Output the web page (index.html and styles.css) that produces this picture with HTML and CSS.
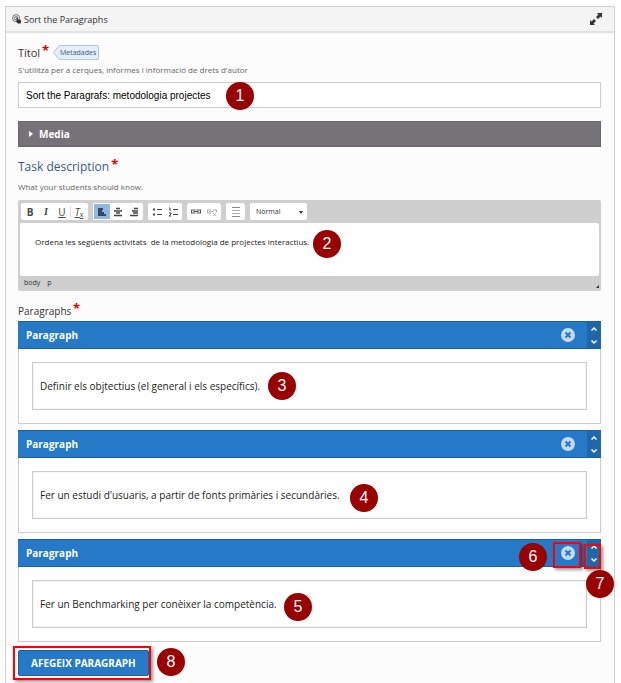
FILE: index.html
```html
<!DOCTYPE html>
<html lang="ca">
<head>
	<meta charset="utf-8">
	<title>Sort the Paragraphs</title>
	<link rel="stylesheet" href="styles.css">
</head>
<body>
	<form class="panel">
		<header class="panel-header">
			<svg class="logo" viewBox="0 0 12 12"><circle cx="5" cy="5" r="4.300" fill="none" stroke="#555"/><circle cx="5" cy="5" r="2" fill="none" stroke="#555"/><path d="M5 4.500l1.300-.5 1 2.500 2.700.5 1 1.500-.5 3H7L4.500 8.500l.5-.8 1 .5z" fill="#333"/></svg>
			<h1>Sort the Paragraphs</h1>
			<button type="button" class="expand" aria-label="Pantalla completa">
				<svg viewBox="0 0 12 12"><path d="M7 0h5v5l-1.500-1.500L8 6 6 4l2.500-2.500zM5 12H0V7l1.500 1.500L4 6l2 2-2.500 2.500z" fill="#333"/></svg>
			</button>
		</header>
		<div class="panel-body">
			<div class="label-row">
				<label for="title">Títol <span class="required">*</span></label>
				<button type="button" class="metadata">
					<svg viewBox="0 0 46 16" preserveAspectRatio="none"><path d="M.5 8l5-6.500Q6.500.5 8 .5h36q1.500 0 1.500 1.500v12q0 1.500-1.500 1.500H8q-1.500 0-2.500-1z" fill="#e6eff8" stroke="#a9c3dc"/></svg>
					<span>Metadades</span>
				</button>
			</div>
			<p class="hint">S'utilitza per a cerques, informes i informació de drets d'autor</p>
			<div class="field">
				<input type="text" id="title" class="title-input" value="Sort the Paragrafs: metodologia projectes">
				<span class="badge badge-1">1</span>
			</div>

			<button type="button" class="media"><span class="arrow"></span>Media</button>

			<label class="task-label" for="task">Task description <span class="required">*</span></label>
			<p class="hint task-hint">What your students should know.</p>
			<div class="editor">
				<div class="toolbar">
					<div class="group">
						<button type="button" class="tool bold">B</button>
						<button type="button" class="tool italic">I</button>
						<button type="button" class="tool underline">U</button>
						<span class="divider"></span>
						<button type="button" class="tool clear"><i>T</i><sub>x</sub></button>
					</div>
					<div class="group">
						<button type="button" class="tool active" aria-label="Left"><svg viewBox="0 0 10 10"><path d="M1 1h5v2H1zM1 3h4v2H1zM1 5h6v2H1zM1 7h8v2H1z" fill="#33485c"/></svg></button>
						<button type="button" class="tool" aria-label="Center"><svg viewBox="0 0 10 10"><path d="M3 1.500h4M1 4h8M3 6h4M1 8.500h8" stroke="#444" stroke-width="1.500"/></svg></button>
						<button type="button" class="tool" aria-label="Right"><svg viewBox="0 0 10 10"><path d="M5 1.500h4M3 4h6M4 6h5M1 8.500h8" stroke="#444" stroke-width="1.500"/></svg></button>
					</div>
					<div class="group">
						<button type="button" class="tool" aria-label="Bullets"><svg viewBox="0 0 10 10"><path d="M1 2.500h2M1 7.500h2" stroke="#444" stroke-width="2"/><path d="M5 2.500h5M5 7.500h5" stroke="#444"/></svg></button>
						<button type="button" class="tool" aria-label="Numbers"><svg viewBox="0 0 10 10"><path d="M1 1h1v3M1 6h2v1L1 9h2M5 2.500h5M5 7.500h5" fill="none" stroke="#444"/></svg></button>
					</div>
					<div class="group">
						<button type="button" class="tool" aria-label="Link"><svg viewBox="0 0 10 10"><path d="M4 3H.500v3H4M6 3h3.500v3H6M2.500 4.500h5M4.500 3h1M4.500 6h1" fill="none" stroke="#555" stroke-width="1.200"/></svg></button>
						<button type="button" class="tool" aria-label="Unlink"><svg viewBox="0 0 10 10"><path d="M4 3H.500v3H4M6 3h3.500v2M2.500 4.500h4M6 6l3 3M9 6L6 9" fill="none" stroke="#aaa"/></svg></button>
					</div>
					<div class="group">
						<button type="button" class="tool rule" aria-label="Line"><svg viewBox="0 0 10 12"><path d="M1 1.500h8M1 10.500h8" stroke="#888"/><path d="M1 4.500h8M1 7.500h8" stroke="#aaa"/></svg></button>
					</div>
					<div class="group">
						<select class="format" aria-label="Format"><option>Normal</option></select>
						<span class="caret"></span>
					</div>
				</div>
				<div class="field">
					<textarea id="task" class="editor-text">Ordena les següents activitats  de la metodologia de projectes interactius.</textarea>
					<span class="badge badge-2">2</span>
				</div>
				<div class="path"><span>body</span><span>p</span><span class="grip"></span></div>
			</div>

			<h2 class="list-label">Paragraphs <span class="required">*</span></h2>
			<ul class="list">
				<li class="item">
					<div class="item-header">
						<label for="p1">Paragraph</label>
						<button type="button" class="remove" aria-label="Remove"><svg viewBox="0 0 14 14"><circle cx="7" cy="7" r="7" fill="#c3daf0"/><path d="M4.500 4.500l5 5M9.500 4.500l-5 5" stroke="#2579c6" stroke-width="2"/></svg></button>
						<div class="order">
							<button type="button" aria-label="Up"><svg viewBox="0 0 8 6"><path d="M1.500 4.500L4 2l2.500 2.500" fill="none" stroke="#fff" stroke-width="1.500"/></svg></button>
							<button type="button" aria-label="Down"><svg viewBox="0 0 8 6"><path d="M1.500 1.500L4 4l2.500-2.500" fill="none" stroke="#fff" stroke-width="1.500"/></svg></button>
						</div>
					</div>
					<div class="item-body">
						<input type="text" id="p1" value="Definir els objtectius (el general i els específics).">
						<span class="badge badge-3">3</span>
					</div>
				</li>
				<li class="item">
					<div class="item-header">
						<label for="p2">Paragraph</label>
						<button type="button" class="remove" aria-label="Remove"><svg viewBox="0 0 14 14"><circle cx="7" cy="7" r="7" fill="#c3daf0"/><path d="M4.500 4.500l5 5M9.500 4.500l-5 5" stroke="#2579c6" stroke-width="2"/></svg></button>
						<div class="order">
							<button type="button" aria-label="Up"><svg viewBox="0 0 8 6"><path d="M1.500 4.500L4 2l2.500 2.500" fill="none" stroke="#fff" stroke-width="1.500"/></svg></button>
							<button type="button" aria-label="Down"><svg viewBox="0 0 8 6"><path d="M1.500 1.500L4 4l2.500-2.500" fill="none" stroke="#fff" stroke-width="1.500"/></svg></button>
						</div>
					</div>
					<div class="item-body">
						<input type="text" id="p2" value="Fer un estudi d'usuaris, a partir de fonts primàries i secundàries.">
						<span class="badge badge-4">4</span>
					</div>
				</li>
				<li class="item">
					<div class="item-header">
						<label for="p3">Paragraph</label>
						<button type="button" class="remove" aria-label="Remove"><svg viewBox="0 0 14 14"><circle cx="7" cy="7" r="7" fill="#c3daf0"/><path d="M4.500 4.500l5 5M9.500 4.500l-5 5" stroke="#2579c6" stroke-width="2"/></svg></button>
						<div class="order">
							<button type="button" aria-label="Up"><svg viewBox="0 0 8 6"><path d="M1.500 4.500L4 2l2.500 2.500" fill="none" stroke="#fff" stroke-width="1.500"/></svg></button>
							<button type="button" aria-label="Down"><svg viewBox="0 0 8 6"><path d="M1.500 1.500L4 4l2.500-2.500" fill="none" stroke="#fff" stroke-width="1.500"/></svg></button>
						</div>
						<span class="mark mark-remove"></span>
						<span class="mark mark-order"></span>
						<span class="badge badge-6">6</span>
						<span class="badge badge-7">7</span>
					</div>
					<div class="item-body">
						<input type="text" id="p3" value="Fer un Benchmarking per conèixer la competència.">
						<span class="badge badge-5">5</span>
					</div>
				</li>
			</ul>
			<div class="add-row">
				<button type="button" class="add">AFEGEIX PARAGRAPH</button>
				<span class="mark mark-add"></span>
				<span class="badge badge-8">8</span>
			</div>
		</div>
	</form>
</body>
</html>
```

FILE: styles.css
```css
* {
    box-sizing: border-box;
}

body {
    margin: 0;
    padding: 6px 6px 0 5px;
    background-color: #fff;
    font-family: "Open Sans", sans-serif;
    font-size: 10px;
    color: #333;
}

button, input, textarea, select {
    font-family: inherit;
    margin: 0;
    padding: 0;
    border: none;
    background: none;
}

svg {
    display: block;
}

h1, h2, p, ul {
    margin: 0;
    padding: 0;
    font-weight: normal;
}

.panel {
    min-height: calc(100vh - 6px);
    border: 1px solid #d0d0d0;
    border-bottom: none;
    background-color: #fcfcfc;
}

.panel-header {
    display: flex;
    align-items: center;
    height: 26px;
    padding: 0 12px 0 6px;
    background-color: #f4f4f4;
    border-bottom: 2px solid #e2e2e2;
}

.panel-header h1 {
    flex: 1;
    font-size: 9px;
}

.logo {
    width: 10px;
    height: 10px;
    margin-right: 2px;
}

.expand svg {
    width: 12px;
    height: 12px;
}

.panel-body {
    padding: 11px 13px 4px 12px;
}

.label-row {
    display: flex;
    align-items: center;
    gap: 4px;
    height: 16px;
    font-size: 11px;
}

.required {
    color: #d00;
    font-size: 13px;
    font-weight: bold;
    line-height: 10px;
    vertical-align: 2px;
    margin-left: -1px;
}

.metadata {
    position: relative;
    width: 46px;
    height: 15px;
    padding-left: 4px;
    font-size: 7px;
    line-height: 15px;
    color: #355a91;
}

.metadata svg {
    position: absolute;
    inset: 0;
    width: 100%;
    height: 100%;
}

.metadata span {
    position: relative;
}

.hint {
    margin: 4px 0 6px;
    font-size: 8px;
    line-height: 12px;
    color: #666;
}

.field {
    position: relative;
}

.title-input {
    display: block;
    width: 100%;
    height: 26px;
    padding: 0 7px;
    border: 1px solid #ccc;
    background-color: #fff;
    font-family: "Liberation Sans", sans-serif;
    font-size: 10px;
    color: #000;
}

.media {
    display: flex;
    align-items: center;
    gap: 6px;
    width: 100%;
    height: 26px;
    margin: 13px 0 11px;
    padding: 0 10px;
    background-color: #757377;
    border: 1px solid #69676b;
    font-size: 10px;
    font-weight: bold;
    color: #fff;
}

.arrow {
    border: 3px solid transparent;
    border-left: 4px solid #fff;
    border-right: none;
}

.task-label {
    display: block;
    height: 18px;
    font-size: 12px;
    line-height: 18px;
    color: #355a91;
}

.task-hint {
    margin: 5px 0 7px;
}

.editor {
    padding: 3px 2px 0;
    background-color: #cfcfcf;
    border-radius: 2px;
}

.toolbar {
    display: flex;
    gap: 5px;
    height: 20px;
    padding-left: 1px;
}

.group {
    position: relative;
    display: flex;
    align-items: center;
    height: 17px;
    padding: 0 1px;
    background-color: #fff;
    border-radius: 2px;
}

.tool {
    display: flex;
    justify-content: center;
    align-items: center;
    width: 16px;
    height: 15px;
    font-size: 10px;
    color: #444;
}

.tool svg {
    width: 10px;
    height: 10px;
}

.rule {
    width: 17px;
}

.rule svg {
    height: 12px;
}

.bold {
    font-weight: bold;
}

.italic {
    font-family: "Liberation Serif", serif;
    font-style: italic;
    font-weight: bold;
}

.underline {
    text-decoration: underline;
}

.clear {
    text-decoration: underline;
}

.clear sub {
    align-self: flex-end;
    font-size: 7px;
    line-height: 9px;
}

.active {
    background-color: #8fb8e0;
}

.divider {
    width: 1px;
    height: 11px;
    background-color: #ddd;
}

.format {
    width: 55px;
    height: 17px;
    padding-left: 5px;
    appearance: none;
    font-size: 7px;
    color: #333;
}

.caret {
    position: absolute;
    top: 8px;
    right: 4px;
    border: 2px solid transparent;
    border-top: 3px solid #333;
    border-bottom: none;
}

.editor-text {
    display: block;
    width: 100%;
    height: 53px;
    padding: 13px 15px;
    background-color: #fff;
    border-radius: 2px;
    resize: none;
    overflow: hidden;
    font-size: 8px;
    line-height: 12px;
    color: #222;
}

.path {
    display: flex;
    gap: 7px;
    height: 15px;
    padding: 0 0 0 4px;
    font-size: 7px;
    line-height: 13px;
}

.grip {
    align-self: flex-end;
    margin: 0 0 3px auto;
    border-left: 3px solid transparent;
    border-bottom: 3px solid #333;
}

.list-label {
    height: 19px;
    margin-top: 11px;
    font-size: 10px;
    line-height: 18px;
}

.list {
    display: flex;
    flex-direction: column;
    gap: 6px;
    list-style: none;
}

.item-header {
    position: relative;
    display: flex;
    align-items: center;
    height: 28px;
    padding-left: 8px;
    background-color: #2579c6;
    border-top: 1px solid #1762a9;
    border-bottom: 1px solid #1762a9;
    color: #fff;
}

.item-header label {
    flex: 1;
    font-size: 10px;
    font-weight: bold;
}

.remove {
    margin-right: 12px;
}

.remove svg {
    width: 14px;
    height: 14px;
}

.order {
    display: flex;
    flex-direction: column;
    justify-content: space-around;
    align-items: center;
    width: 14px;
    height: 26px;
    background-color: #1f67a8;
}

.order svg {
    width: 8px;
    height: 6px;
}

.item-body {
    position: relative;
    padding: 13px;
    background-color: #fff;
    border: 1px solid #ccc;
    border-top: none;
}

.item-body input {
    display: block;
    width: 100%;
    height: 48px;
    padding: 0 7px;
    border: 1px solid #ccc;
    box-shadow: inset 0 0 2px #ddd;
    font-size: 10px;
    color: #222;
}

.add-row {
    position: relative;
    display: flex;
    margin-top: 8px;
}

.add {
    height: 26px;
    padding: 0 12px;
    background-color: #2579c6;
    border: 1px solid #1762a9;
    border-radius: 2px;
    font-size: 10px;
    font-weight: bold;
    color: #fff;
}

/* numbered callouts over the form */
.badge {
    position: absolute;
    z-index: 2;
    width: 28px;
    height: 28px;
    border-radius: 50%;
    background-color: #900;
    font-family: "Liberation Sans", sans-serif;
    font-size: 16px;
    line-height: 28px;
    text-align: center;
    color: #fff;
}

.badge-1 {
    left: 208px;
    top: 0;
}

.badge-2 {
    left: 293px;
    top: 7px;
}

.badge-3 {
    left: 249px;
    top: 23px;
}

.badge-4 {
    left: 331px;
    top: 26px;
}

.badge-5 {
    left: 265px;
    top: 26px;
}

.badge-6 {
    right: 54px;
    top: 3px;
}

.badge-7 {
    right: -13px;
    top: 30px;
}

.badge-8 {
    left: 139px;
    top: -2px;
}

.mark {
    position: absolute;
    z-index: 1;
    border: 2px solid #f00;
    box-shadow: 2px 2px 3px rgba(0, 0, 0, 0.4);
}

.mark-remove {
    right: 20px;
    top: 2px;
    width: 28px;
    height: 26px;
}

.mark-order {
    right: 0;
    top: 4px;
    width: 17px;
    height: 25px;
}

.mark-add {
    left: -5px;
    top: -4px;
    width: 138px;
    height: 34px;
}
```
